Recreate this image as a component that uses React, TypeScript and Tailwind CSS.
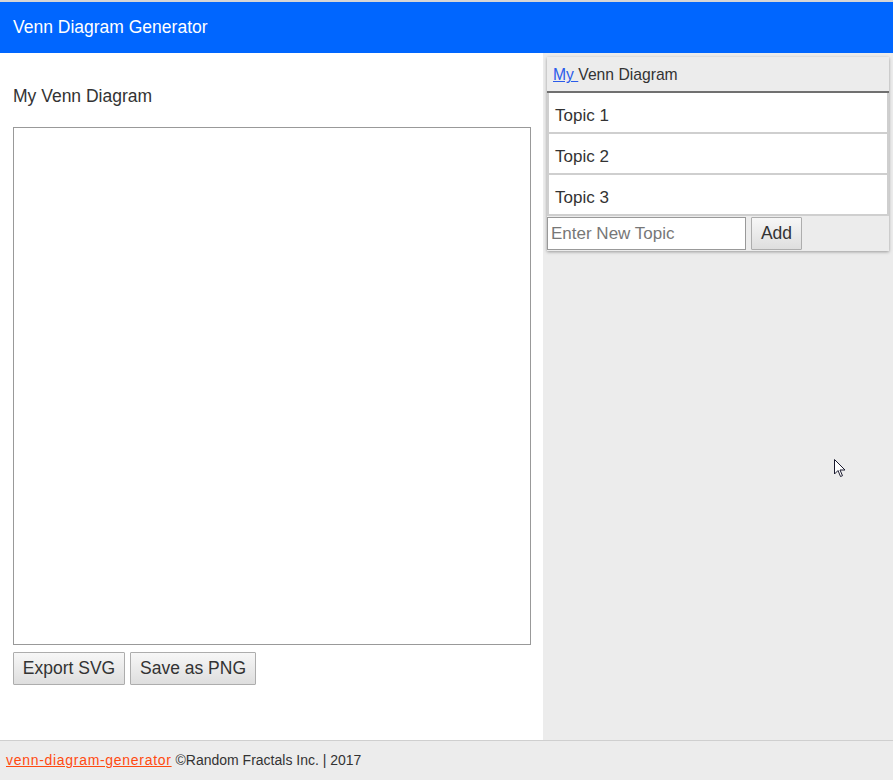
import React from 'react';

const topics = ['Topic 1', 'Topic 2', 'Topic 3'];

const btn =
    "h-[33px] text-[17.5px] text-[#333] border border-[#adadad] rounded-[1px] bg-gradient-to-b from-[#f7f7f7] to-[#dedede] leading-none";

export default function App() {
    return (
        <div className="w-[893px] h-[780px] flex flex-col font-['Liberation_Sans',Arial,sans-serif] text-[#333] relative overflow-hidden">
            {/* top edge */}
            <div className="h-[2px] bg-[#d6d6d6]" />

            {/* Header bar */}
            <div className="h-[51px] bg-[#0066ff] text-white text-[17.5px] px-[13px] flex items-center">
                Venn Diagram Generator
            </div>

            <div className="flex-1 flex min-h-0">
                {/* Diagram side */}
                <div className="w-[543px] bg-white pl-[13px] pt-[33px]">
                    <div className="text-[17.5px] leading-[20px]">My Venn Diagram</div>
                    <div className="mt-[21px] w-[518px] h-[518px] border border-[#999]" />
                    <div className="mt-[7px] flex gap-[5px]">
                        <button className={btn + " w-[112px]"}>Export SVG</button>
                        <button className={btn + " w-[126px]"}>Save as PNG</button>
                    </div>
                </div>

                {/* Topics side */}
                <div className="flex-1 bg-[#ececec] p-[4px]">
                    <div className="shadow-[0_1px_3px_rgba(0,0,0,0.35)] bg-[#ececec]">
                        <div className="h-[36px] px-[6px] pt-[2px] flex items-center text-[15.7px] border-b-2 border-[#707070]">
                            <a className="text-[#2a5bea] underline">My&nbsp;</a>
                            <span>Venn Diagram</span>
                        </div>
                        {topics.map((t) => (
                            <div
                                key={t}
                                className="h-[41px] bg-white border-2 border-t-0 border-[#cfcfcf] px-[6px] pt-[6px] flex items-center text-[17px]"
                            >
                                {t}
                            </div>
                        ))}
                        <div className="h-[35px] flex items-center">
                            <input
                                className="w-[199px] h-[33px] border border-[#999] bg-white px-[3px] text-[17px] outline-none placeholder:text-[#777]"
                                placeholder="Enter New Topic"
                            />
                            <button className={btn + " ml-[5px] w-[51px]"}>Add</button>
                        </div>
                    </div>
                </div>
            </div>

            {/* Footer */}
            <div className="h-[40px] bg-[#ececec] border-t border-[#cfcfcf] px-[6px] flex items-center text-[14px]">
                <a className="text-[#ff4a10] underline tracking-[0.7px]">venn-diagram-generator</a>
                <span>&nbsp;©Random Fractals Inc. | 2017</span>
            </div>

            {/* mouse pointer */}
            <svg className="absolute left-[834px] top-[459px]" width="14" height="20" viewBox="0 0 14 20">
                <path d="M0.5 0.5 L0.5 15 L4 11.5 L6.5 17.5 L8.5 16.7 L6 11 L11 11 Z" fill="#fff" stroke="#1a1a2e" strokeWidth="1" />
            </svg>
        </div>
    );
}
